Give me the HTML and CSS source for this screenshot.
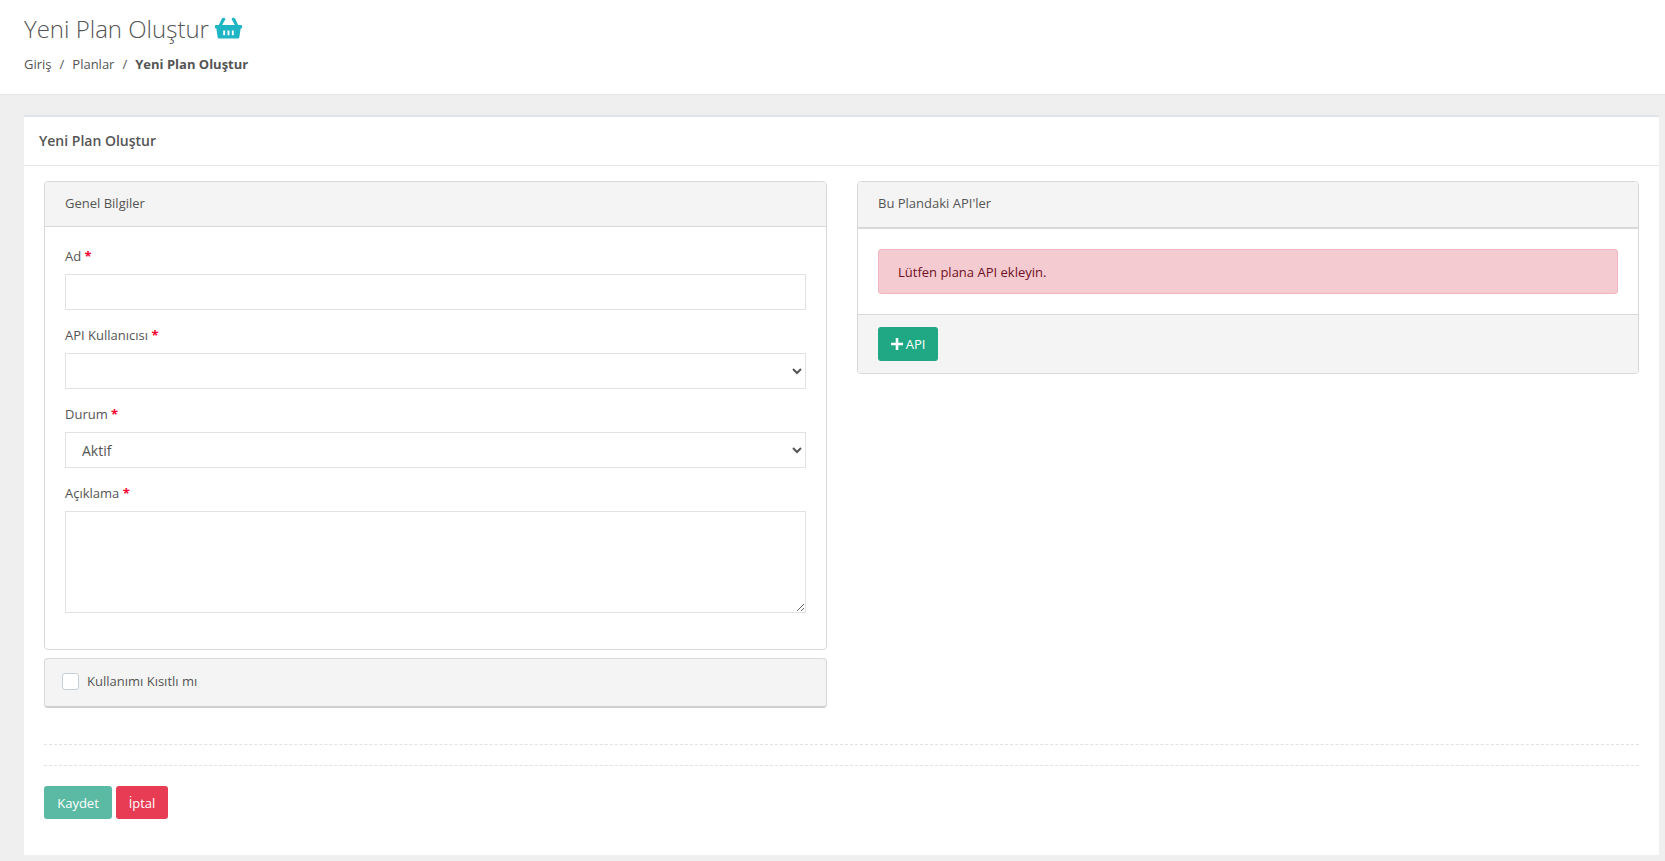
FILE: index.html
```html
<!DOCTYPE html>
<html lang="tr">
<head>
<meta charset="utf-8">
<title>Yeni Plan Oluştur</title>
<link rel="stylesheet" href="styles.css">
</head>
<body>
<header class="page-head">
  <h1 class="page-title">Yeni Plan Oluştur
    <svg class="basket" viewBox="0 0 28 22" aria-hidden="true">
      <path d="M7.200 1.200 3.600 8.600h3.400l3.600-6.400c.3-.7 0-1.300-.6-1.600-.9-.4-2.400-.1-2.800.6zM20.800 1.200l3.600 7.400H21l-3.600-6.400c-.3-.7 0-1.300.6-1.600.9-.4 2.400-.1 2.800.6z"/>
      <path fill-rule="evenodd" d="M1 8h26c.6 0 1 .4 1 1v1.400c0 .6-.4 1-1 1h-.4l-1.300 8.900c-.1.9-.9 1.700-1.900 1.700H4.600c-1 0-1.800-.8-1.900-1.700L1.400 11.400H1c-.6 0-1-.4-1-1V9c0-.6.4-1 1-1zm7.500 5.500v5h2v-5zm4.500 0v5h2v-5zm4.500 0v5h2v-5z"/>
    </svg>
  </h1>
  <nav class="crumbs">
    <span>Giriş</span><span class="sep">/</span><span>Planlar</span><span class="sep">/</span><strong>Yeni Plan Oluştur</strong>
  </nav>
</header>
<main class="content">
  <section class="card">
    <div class="card-head">Yeni Plan Oluştur</div>
    <div class="card-body">
      <div class="cols">
        <div class="col">
          <div class="panel">
            <div class="panel-head">Genel Bilgiler</div>
            <div class="panel-body form-body">
              <div class="field">
                <label class="lbl" for="ad">Ad <span class="req">*</span></label>
                <input class="ctl" id="ad" type="text">
              </div>
              <div class="field">
                <label class="lbl" for="user">API Kullanıcısı <span class="req">*</span></label>
                <select class="ctl" id="user"><option></option></select>
              </div>
              <div class="field">
                <label class="lbl" for="durum">Durum <span class="req">*</span></label>
                <select class="ctl" id="durum"><option>Aktif</option></select>
              </div>
              <div class="field">
                <label class="lbl" for="acik">Açıklama <span class="req">*</span></label>
                <textarea class="ctl area" id="acik"></textarea>
              </div>
            </div>
          </div>
          <div class="panel panel-check">
            <label class="check"><span class="box"></span>Kullanımı Kısıtlı mı</label>
          </div>
        </div>
        <div class="col">
          <div class="panel">
            <div class="panel-head thick">Bu Plandaki API'ler</div>
            <div class="panel-body">
              <div class="alert">Lütfen plana API ekleyin.</div>
            </div>
            <div class="panel-foot">
              <button class="btn btn-add" type="button">
                <svg class="plus" viewBox="0 0 12 12" aria-hidden="true"><path d="M4.700 0h2.600v4.700H12v2.600H7.300V12H4.700V7.300H0V4.700h4.700z"/></svg>API
              </button>
            </div>
          </div>
        </div>
      </div>
      <div class="rule first"></div>
      <div class="rule"></div>
      <div class="actions">
        <button class="btn btn-save" type="button">Kaydet</button>
        <button class="btn btn-cancel" type="button">İptal</button>
      </div>
    </div>
  </section>
</main>
</body>
</html>
```
FILE: styles.css
```css
* { box-sizing: border-box; }
html, body { height: 100%; }
body {
  margin: 0;
  background: #efefef;
  color: #555555;
  font-family: "Open Sans", sans-serif;
  font-size: 13px;
  line-height: 20px;
  overflow: hidden;
}
.page-head {
  height: 95px;
  background: #fff;
  border-bottom: 1px solid #e4e4e4;
  padding: 12px 24px 0;
}
.page-title {
  margin: 0;
  display: flex;
  align-items: center;
  gap: 6px;
  font-size: 24px;
  font-weight: 300;
  line-height: 34px;
  color: #555;
}
.basket { width: 27px; height: 22px; fill: #1fb5c4; margin-top: -2px; }
.crumbs {
  margin-top: 8px;
  display: flex;
  font-size: 13px;
  line-height: 20px;
}
.crumbs .sep { margin: 0 8px; }
.crumbs strong { font-weight: 700; }
.content { padding: 20px 6px 0 24px; }
.card {
  background: #fff;
  border-top: 2px solid #e0e4e8;
  height: 740px;
}
.card-head {
  height: 49px;
  padding: 0 15px;
  display: flex;
  align-items: center;
  font-size: 14px;
  font-weight: 600;
  border-bottom: 1px solid #e5e5e5;
}
.card-body { padding: 15px 20px 0; }
.cols {
  display: grid;
  grid-template-columns: 783px 782px;
  gap: 30px;
}
.panel {
  background: #fff;
  border: 1px solid #d8d8d8;
  border-radius: 4px;
}
.panel-head {
  height: 45px;
  padding: 0 20px 2px;
  display: flex;
  align-items: center;
  background: #f4f4f4;
  border-bottom: 1px solid #d8d8d8;
  border-radius: 3px 3px 0 0;
  font-size: 13px;
}
.panel-head.thick { border-bottom-width: 2px; height: 47px; padding-bottom: 3px; }
.panel-body { padding: 20px; }
.form-body { padding: 19px 20px 0; height: 422px; }
.field { margin-bottom: 15px; }
.lbl { display: block; font-size: 13px; line-height: 20px; margin-bottom: 8px; }
.req { color: #f4002c; font-weight: 700; }
.ctl {
  display: block;
  width: 100%;
  height: 36px;
  background: #fff;
  border: 1px solid #e2e2e2;
  border-radius: 0;
  padding: 0 12px;
  font-family: inherit;
  font-size: 14px;
  color: #555;
}
.area { height: 102px; padding: 8px 12px; resize: vertical; }
.panel-check {
  margin-top: 8px;
  height: 50px;
  background: #f4f4f4;
  border-bottom-width: 2px;
  border-bottom-color: #cfcfcf;
  padding: 13px 17px 0;
}
.check { display: flex; align-items: center; gap: 8px; font-size: 13px; line-height: 18px; }
.box {
  width: 17px;
  height: 17px;
  background: #fff;
  border: 1px solid #c6d0da;
  border-radius: 3px;
}
.alert {
  height: 45px;
  padding: 0 19px;
  display: flex;
  align-items: center;
  background: #f5cbd2;
  border: 1px solid #f0b5be;
  border-radius: 3px;
  color: #6f1024;
  font-size: 13px;
}
.panel-foot {
  height: 59px;
  padding: 12px 20px;
  background: #f4f4f4;
  border-top: 1px solid #d8d8d8;
  border-radius: 0 0 3px 3px;
}
.btn {
  border: 0;
  border-radius: 3px;
  color: #fff;
  font-family: inherit;
  font-size: 13px;
  height: 33px;
  padding: 0;
  display: inline-flex;
  align-items: center;
  justify-content: center;
}
.btn-add { width: 60px; height: 34px; background: #1fa883; gap: 3px; }
.plus { width: 12px; height: 12px; fill: #fff; }
.rule { border-top: 1px dashed #e2e2e2; }
.rule.first { margin-top: 36px; margin-bottom: 20px; }
.actions { display: flex; gap: 4px; margin-top: 20px; }
.btn-save { width: 68px; background: #5bbaa3; }
.btn-cancel { width: 52px; background: #e83b54; }
```
